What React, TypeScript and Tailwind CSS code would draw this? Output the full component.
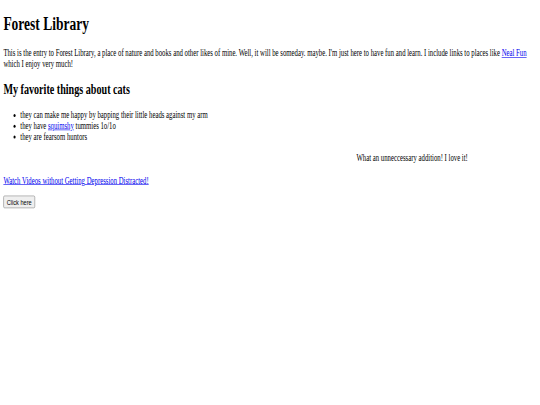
import React from "react";

export default function App() {
  return (
    <div className="w-[540px] h-[405px] overflow-hidden bg-white">
      <div
        className="flow-root w-[1280px] h-[675px] origin-top-left [transform:scale(0.421875,0.6)] text-black text-[16px] leading-[normal]"
        style={{ fontFamily: '"Liberation Serif", "Times New Roman", serif' }}
      >
        <div className="px-[8px]">
          <h1 className="text-[32px] font-bold mt-[21.44px] mb-[21.44px] leading-[normal]">Forest Library</h1>
          <p className="my-[16px]">
            This is the entry to Forest Library, a place of nature and books and other likes of mine. Well, it will be
            someday. maybe. I'm just here to have fun and learn. I include links to places like{" "}
            <a href="#" className="text-[#0000ee] underline">Neal Fun</a> which I enjoy very much!
          </p>
          <h2 className="text-[24px] font-bold my-[19.92px] leading-[normal]">My favorite things about cats</h2>
          <ul className="mt-[16px] mb-[17.5px] pl-[40px] list-disc">
            <li>they can make me happy by bapping their little heads against my arm</li>
            <li>
              they have <a href="#" className="text-[#0000ee] underline">squimshy</a> tummies 1o/1o
            </li>
            <li>they are fearsom huntors</li>
          </ul>
          <div className="overflow-hidden whitespace-nowrap pl-[837px]">
            What an unneccessary addition! I love it!
          </div>
          <p className="mt-[20px] mb-[16px]">
            <a href="#" className="text-[#0000ee] underline">Watch Videos without Getting Depression Distracted!</a>
          </p>
          <button
            className="bg-[#efefef] border border-[#767676] rounded-[3px] px-[7px] py-[2px] text-[13.333px] leading-[normal] text-black"
            style={{ fontFamily: '"Liberation Sans", Arial, sans-serif' }}
          >
            Click here
          </button>
        </div>
      </div>
    </div>
  );
}
